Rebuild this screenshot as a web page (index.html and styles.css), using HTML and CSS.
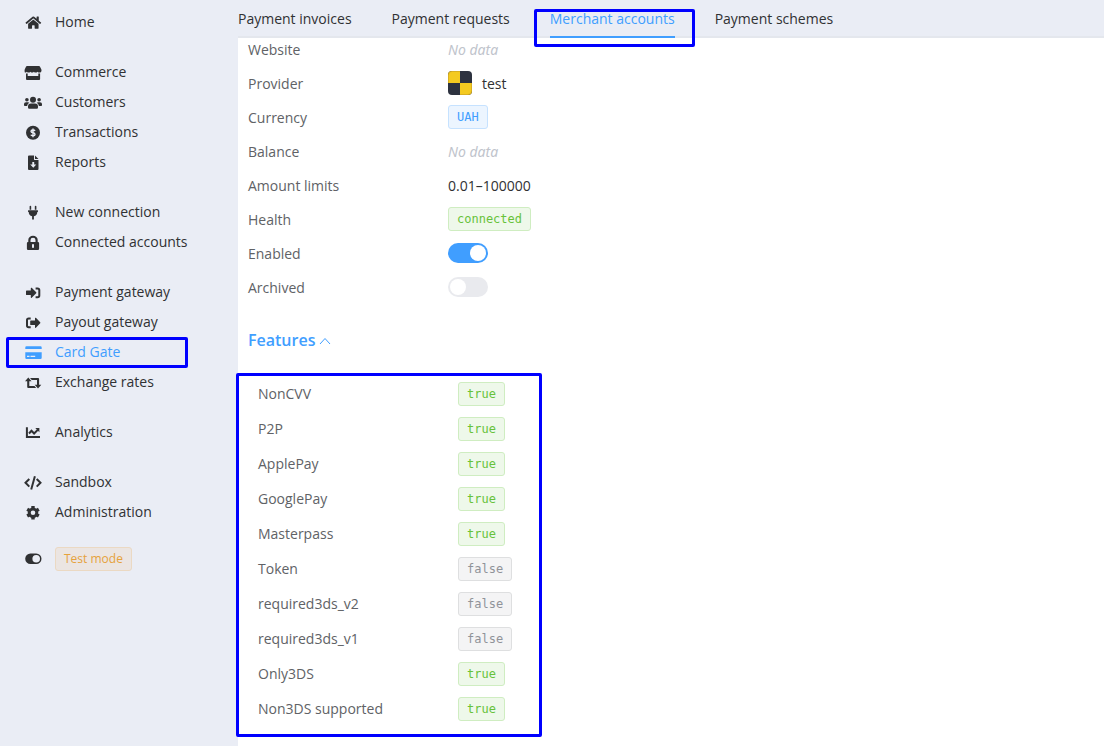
FILE: index.html
```html
<!DOCTYPE html>
<html lang="en">
<head>
<meta charset="utf-8">
<meta name="viewport" content="width=device-width, initial-scale=1">
<title>Merchant accounts</title>
<link rel="stylesheet" href="styles.css">
</head>
<body>
<div class="app">
  <nav class="sidebar" aria-label="Main">
    <div class="nav-group">
      <a class="nav-item" href="#"><svg class="icon" viewBox="0 0 18 18"><path transform="translate(1.5 2.7) scale(.0272)" d="M280.37 148.26L96 300.11V464a16 16 0 0 0 16 16l112.06-.29a16 16 0 0 0 15.92-16V368a16 16 0 0 1 16-16h64a16 16 0 0 1 16 16v95.64a16 16 0 0 0 16 16.05L464 480a16 16 0 0 0 16-16V300L295.67 148.26a12.19 12.19 0 0 0-15.3 0zM571.6 251.47L488 182.56V44.05a12 12 0 0 0-12-12h-56a12 12 0 0 0-12 12v72.61L318.47 43a48 48 0 0 0-61 0L4.34 251.47a12 12 0 0 0-1.6 16.9l25.5 31A12 12 0 0 0 45.15 301l235.22-193.74a12.19 12.19 0 0 1 15.3 0L530.9 301a12 12 0 0 0 16.9-1.6l25.5-31a12 12 0 0 0-1.7-16.93z"/></svg>Home</a>
    </div>
    <div class="nav-group">
      <a class="nav-item" href="#"><svg class="icon" viewBox="0 0 18 18"><path d="M3 3h12q.6 0 .9.5l1.500 2.900c.5 1.600-.4 3.200-2 3.200-.8 0-1.500-.4-1.900-.9-.9 1.200-2.900 1.200-3.600 0-.5.700-1.900.900-1.900.900s-1.100-.200-1.600-.900c-.8 1.200-2.800 1.200-3.600 0-.5.6-1.100.9-1.900.9C1.100 9.600.2 8 .7 6.400L2.100 3.500Q2.400 3 3 3zM2 10.500c.6.100 1.200.100 1.700-.1V13h10.600v-2.600c.6.200 1.200.200 1.800.1V16q0 1-1 1H3q-1 0-1-1z"/></svg>Commerce</a>
      <a class="nav-item" href="#"><svg class="icon" viewBox="0 0 18 18"><circle cx="9" cy="6.700" r="3"/><circle cx="2.900" cy="6.800" r="1.800"/><circle cx="15.100" cy="6.800" r="1.800"/><path d="M7 10.500h4q3 0 3 3v1q0 1.200-1.200 1.200H5.200Q4 15.700 4 14.500v-1q0-3 3-3zM2 9.200h2q.8 0 1.300.5-1.900 1-2.200 3.300H.8Q0 13 0 12.200V11q0-1.800 2-1.800zM14 9.200h2q2 0 2 1.800v1.200q0 .8-.8.8h-2.300q-.3-2.300-2.200-3.300.5-.5 1.300-.5z"/></svg>Customers</a>
      <a class="nav-item" href="#"><svg class="icon" viewBox="0 0 18 18"><circle cx="9" cy="9.800" r="7"/><path class="cut" d="M11 7.900Q10.600 7 9 7 7 7 7 8.300q0 1.100 2 1.500t2 1.600q0 1.300-2 1.300-1.700 0-2.100-1M9 5.500v8.700"/></svg>Transactions</a>
      <a class="nav-item" href="#"><svg class="icon" viewBox="0 0 18 18"><path fill-rule="evenodd" d="M5 2.600h5v3.600q0 .9.900.9h3.600V16q0 1-1 1H5q-1 0-1-1V3.600q0-1 1-1zM11 2.600l3.500 3.500H11zM8.300 9h1.900v2.500h2.100l-3 3.300-3.100-3.300h2.100z"/></svg>Reports</a>
    </div>
    <div class="nav-group">
      <a class="nav-item" href="#"><svg class="icon" viewBox="0 0 18 18"><path d="M5.600 3.500q0-.8.800-.8t.8.800v3.200H5.600zM10.800 3.500q0-.8.800-.8t.8.800v3.200h-1.600zM4.300 7.300h9.400q.3 0 .3.400v.8q0 .3-.3.400h-.4q0 3.400-3.400 4.300v3.400H8.100v-3.400q-3.400-.9-3.400-4.300h-.4Q4 8.900 4 8.500v-.8q0-.4.3-.4z"/></svg>New connection</a>
      <a class="nav-item" href="#"><svg class="icon" viewBox="0 0 18 18"><path fill-rule="evenodd" d="M4.300 9V6.900a4.700 4.200 0 0 1 9.400 0V9h.2q1.200 0 1.200 1.200v5.500q0 1.200-1.200 1.200H4.100q-1.200 0-1.200-1.200v-5.500Q2.900 9 4.100 9zm2.200 0h5V6.900a2.500 2.100 0 0 0-5 0zM8 11.700v2.600q0 .8 1 .8t1-.8v-2.600q0-.8-1-.8t-1 .8z"/></svg>Connected accounts</a>
    </div>
    <div class="nav-group">
      <a class="nav-item" href="#"><svg class="icon" viewBox="0 0 18 18"><path d="M2.700 7.500h4.100V5.300q.1-1 .9-.5l4.500 4.500q.4.500 0 1l-4.500 4.500q-.8.500-.9-.5v-2.200H2.700q-.7 0-.7-.7V8.200q0-.7.7-.7z"/><path class="line" d="M11.600 5.400h2q1.700 0 1.700 1.700v5.400q0 1.700-1.700 1.700h-2"/></svg>Payment gateway</a>
      <a class="nav-item" href="#"><svg class="icon" viewBox="0 0 18 18"><path d="M6.900 7.500H11V5.300q.1-1 .9-.5l4.300 4.500q.4.500 0 1l-4.300 4.500q-.8.500-.9-.5v-2.200H6.900q-.7 0-.7-.7V8.200q0-.7.7-.7z"/><path class="line" d="M6.700 5.400h-2Q3 5.400 3 7.100v5.400q0 1.700 1.700 1.700h2"/></svg>Payout gateway</a>
      <a class="nav-item nav-item-active marked" href="#" aria-current="page"><svg class="icon" viewBox="0 0 18 18"><path fill-rule="evenodd" d="M2.500 3.200h14q1.200 0 1.200 1.200V6H1.300V4.400q0-1.200 1.200-1.200zM1.300 9.200h16.400v5.500q0 1.300-1.200 1.300h-14q-1.200 0-1.200-1.300zM3 12.800V14h2.500v-1.200zm3.500 0V14h4.700v-1.200z"/></svg>Card Gate</a>
      <a class="nav-item" href="#"><svg class="icon" viewBox="0 0 18 18"><path d="M4.300 4.600 7.600 8.200H5.300v4.900h5.200l1.700 2H4.200q-1 0-1-1V8.200H1zM6 4.900h8.100q1 0 1 1v5.900h2.200L14 15.400l-3.300-3.600h2.300V6.900H7.800z"/></svg>Exchange rates</a>
    </div>
    <div class="nav-group">
      <a class="nav-item" href="#"><svg class="icon" viewBox="0 0 18 18"><path class="line" d="M2.900 4.300v9.800H16M5 10.500l2.500-2.700 2.600 2.700 3.900-3.900"/><path d="M11.300 5.100h4.100V9.300z"/></svg>Analytics</a>
    </div>
    <div class="nav-group">
      <a class="nav-item" href="#"><svg class="icon" viewBox="0 0 18 18"><path class="line" d="M5.300 6 1.500 9.800l3.800 3.800M12.700 6l3.800 3.800-3.800 3.800M10.900 3.200 7.200 16.400"/></svg>Sandbox</a>
      <a class="nav-item" href="#"><svg class="icon" viewBox="0 0 18 18"><path class="gear" d="M9 3v3M9 13.400v3M3.200 6.300l2.600 1.500M12.200 11.500l2.600 1.500M3.200 13l2.600-1.500M12.200 7.800l2.600-1.500"/><circle class="gear-ring" cx="9" cy="9.700" r="3.800"/></svg>Administration</a>
    </div>
    <div class="nav-mode">
      <svg class="icon" viewBox="0 0 18 18"><path fill-rule="evenodd" d="M6.500 3.400h5.700a5.300 5.300 0 0 1 0 10.600H6.500a5.300 5.300 0 0 1 0-10.600zm5.700 1.500a3.800 3.800 0 1 0 0 7.600 3.800 3.800 0 0 0 0-7.600z"/></svg>
      <span class="tag tag-warning">Test mode</span>
    </div>
  </nav>

  <main class="main">
    <nav class="tabs" aria-label="Sections">
      <a class="tab" href="#">Payment invoices</a>
      <a class="tab" href="#">Payment requests</a>
      <a class="tab tab-active marked" href="#" aria-current="page">Merchant accounts</a>
      <a class="tab" href="#">Payment schemes</a>
    </nav>

    <section class="panel">
      <dl class="details">
        <div class="row"><dt>Website</dt><dd class="empty">No data</dd></div>
        <div class="row"><dt>Provider</dt><dd class="provider"><svg class="logo" viewBox="0 0 24 24"><rect width="24" height="24" rx="4" fill="#2d323f"/><path fill="#d9b021" d="M4 0h8v12H0V4a4 4 0 0 1 4-4zM12 12h12v8a4 4 0 0 1-4 4h-8z"/><path fill="#f4ca20" d="M4 1h8v11H1V4a3 3 0 0 1 3-3zM12 12h11v8a3 3 0 0 1-3 3h-8z"/></svg>test</dd></div>
        <div class="row"><dt>Currency</dt><dd><span class="tag tag-primary">UAH</span></dd></div>
        <div class="row"><dt>Balance</dt><dd class="empty">No data</dd></div>
        <div class="row"><dt>Amount limits</dt><dd>0.01–100000</dd></div>
        <div class="row"><dt>Health</dt><dd><span class="tag tag-success">connected</span></dd></div>
        <div class="row"><dt><label for="enabled">Enabled</label></dt><dd><input class="switch" type="checkbox" role="switch" id="enabled" checked></dd></div>
        <div class="row"><dt><label for="archived">Archived</label></dt><dd><input class="switch" type="checkbox" role="switch" id="archived"></dd></div>
      </dl>

      <h2 class="section-title">
        <button class="collapse" type="button" aria-expanded="true" aria-controls="features">Features<svg class="chevron" viewBox="0 0 12 12"><path d="M1 10l5-5.500L11 10"/></svg></button>
      </h2>

      <dl class="features marked" id="features">
        <div class="row"><dt>NonCVV</dt><dd><span class="tag tag-success">true</span></dd></div>
        <div class="row"><dt>P2P</dt><dd><span class="tag tag-success">true</span></dd></div>
        <div class="row"><dt>ApplePay</dt><dd><span class="tag tag-success">true</span></dd></div>
        <div class="row"><dt>GooglePay</dt><dd><span class="tag tag-success">true</span></dd></div>
        <div class="row"><dt>Masterpass</dt><dd><span class="tag tag-success">true</span></dd></div>
        <div class="row"><dt>Token</dt><dd><span class="tag tag-info">false</span></dd></div>
        <div class="row"><dt>required3ds_v2</dt><dd><span class="tag tag-info">false</span></dd></div>
        <div class="row"><dt>required3ds_v1</dt><dd><span class="tag tag-info">false</span></dd></div>
        <div class="row"><dt>Only3DS</dt><dd><span class="tag tag-success">true</span></dd></div>
        <div class="row"><dt>Non3DS supported</dt><dd><span class="tag tag-success">true</span></dd></div>
      </dl>
    </section>
  </main>
</div>
</body>
</html>
```
FILE: styles.css
```css
* {
  box-sizing: border-box;
}

body {
  margin: 0;
  background: #eaedf5;
  color: #303133;
  font: 14px/24px "Open Sans", "Noto Sans", sans-serif;
}

a {
  color: inherit;
  text-decoration: none;
}

dl,
dd,
h2 {
  margin: 0;
}

.app {
  display: flex;
  min-height: 100vh;
}

/* Sidebar */

.sidebar {
  display: flex;
  flex: 0 0 238px;
  flex-direction: column;
  gap: 20px;
  padding: 7px 50px 7px 6px;
}

.nav-item,
.nav-mode {
  display: flex;
  align-items: center;
  gap: 13px;
  padding-left: 18px;
}

.nav-item {
  height: 30px;
  white-space: nowrap;
}

.nav-item-active {
  color: #409eff;
}

.icon {
  flex: none;
  width: 18px;
  height: 18px;
  fill: currentColor;
}

.icon .line {
  fill: none;
  stroke: currentColor;
  stroke-width: 2;
}

.icon .cut {
  fill: none;
  stroke: #eaedf5;
  stroke-width: 1.4;
}

.icon .gear {
  stroke: currentColor;
  stroke-width: 3.4;
}

.icon .gear-ring {
  fill: none;
  stroke: currentColor;
  stroke-width: 3;
}

/* Highlight frames drawn over the content */

.marked {
  position: relative;
}

.marked::after {
  content: "";
  position: absolute;
  inset: 0;
  border: 3px solid #0000ff;
  border-radius: 2px;
  pointer-events: none;
}

.nav-item.marked::after {
  inset: 0 0 -1px;
}

.tab.marked::after {
  inset: 9px -20px -11px -16px;
}

.features.marked::after {
  inset: 0 0 0 -12px;
}

/* Tabs */

.main {
  display: flex;
  flex: 1;
  flex-direction: column;
  min-width: 0;
}

.tabs {
  display: flex;
  gap: 40px;
  border-bottom: 2px solid #e4e7ed;
}

.tab {
  height: 38px;
  margin-bottom: -2px;
  border-bottom: 2px solid transparent;
  line-height: 38px;
  white-space: nowrap;
}

.tab-active {
  border-bottom-color: #409eff;
  color: #409eff;
}

/* Account panel */

.panel {
  flex: 1;
  padding: 0 10px 9px;
  background: #fff;
}

.details,
.features {
  display: grid;
  gap: 10px;
}

.row {
  display: grid;
  grid-template-columns: 200px 1fr;
  height: 24px;
}

.row dt {
  color: #606266;
}

.row dd {
  display: flex;
  align-items: center;
  height: 24px;
}

.row .empty {
  color: #c0c4cc;
  font-family: "Noto Sans", sans-serif;
  font-style: italic;
}

.provider {
  gap: 10px;
}

.logo {
  width: 24px;
  height: 24px;
}

.section-title {
  margin: 28px 0 21px;
  font-size: 16px;
  line-height: 24px;
}

.collapse {
  display: flex;
  align-items: center;
  gap: 4px;
  padding: 0;
  border: 0;
  background: none;
  color: #409eff;
  font: inherit;
  font-weight: 600;
}

.chevron {
  width: 12px;
  height: 12px;
  fill: none;
  stroke: currentColor;
}

.features {
  gap: 11px;
  width: 294px;
  padding: 9px 10px 16px;
}

/* Tags */

.tag {
  height: 24px;
  padding: 0 8px;
  border: 1px solid;
  border-radius: 3px;
  font-size: 12px;
  line-height: 22px;
}

.row .tag {
  font-family: "DejaVu Sans Mono", monospace;
}

.tag-primary {
  border-color: #c6e2ff;
  background: #ecf5ff;
  color: #409eff;
}

.tag-success {
  border-color: #cfedc1;
  background: #eef8ea;
  color: #67c23a;
}

.tag-info {
  border-color: #dedfe0;
  background: #f4f4f5;
  color: #909399;
}

.tag-warning {
  border-color: #ebd9c3;
  background: #ebe5e2;
  color: #e6a23c;
}

/* Switch */

.switch {
  appearance: none;
  display: flex;
  width: 40px;
  height: 20px;
  margin: 0;
  padding: 2px;
  border-radius: 10px;
  background: #e9eaee;
}

.switch::before {
  content: "";
  width: 16px;
  height: 16px;
  border-radius: 50%;
  background: #fff;
}

.switch:checked {
  justify-content: flex-end;
  background: #409eff;
}

.details .tag,
.details .logo,
.details .switch {
  margin-bottom: 2px;
}
```
